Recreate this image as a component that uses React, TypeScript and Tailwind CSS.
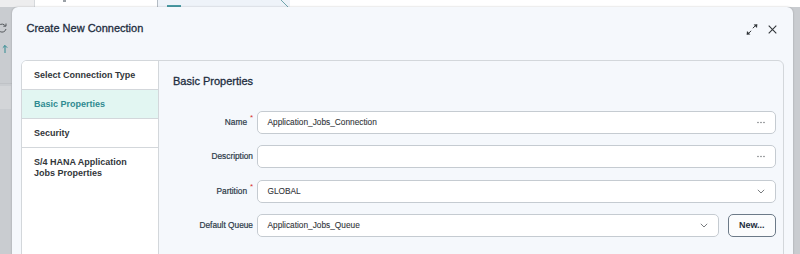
import React from "react";

function Dots() {
  return (
    <svg width="8" height="3" viewBox="0 0 8 3" className="shrink-0">
      <circle cx="1" cy="1.5" r="0.65" fill="#5b5f63" />
      <circle cx="4" cy="1.5" r="0.65" fill="#5b5f63" />
      <circle cx="7" cy="1.5" r="0.65" fill="#5b5f63" />
    </svg>
  );
}

function Chevron() {
  return (
    <svg width="8" height="5" viewBox="0 0 8 5" className="shrink-0">
      <path d="M0.8 0.8 L4 4 L7.2 0.8" fill="none" stroke="#6a6d70" strokeWidth="0.9" />
    </svg>
  );
}

function Row({ label, required, children }: { label: string; required?: boolean; children: React.ReactNode }) {
  return (
    <div className="flex items-center h-[23px]">
      <div className="w-[80px] shrink-0 flex justify-end items-center text-[8.3px] text-[#2c3a48] [-webkit-text-stroke:0.2px_#2c3a48]">
        <span>{label}</span>
        {required ? (
          <span className="ml-[3px] w-[3px] text-[8px] relative -top-[4px] text-[#d9322c] leading-none [-webkit-text-stroke:0px]">*</span>
        ) : null}
      </div>
      <div className="ml-[4px] flex-1 flex items-center h-full">{children}</div>
    </div>
  );
}

function Field({ value, right }: { value: string; right: React.ReactNode }) {
  return (
    <div className="flex-1 h-full flex items-center justify-between bg-white border border-[#c5cbd1] rounded-[5px] pl-[9.5px] pr-[10px]">
      <span className="text-[8.3px] text-[#32363a] [-webkit-text-stroke:0.1px_#32363a]">{value}</span>
      {right}
    </div>
  );
}

function NavItem({ children, active, last }: { children: React.ReactNode; active?: boolean; last?: boolean }) {
  return (
    <div
      className={
        "px-[12px] py-[8.5px] leading-[11px] text-[9px] font-bold " +
        (last ? "" : "border-b border-[#d3d7db] ") +
        (active ? "bg-[#e2f6f2] text-[#2f8a91]" : "bg-white text-[#32363a]")
      }
    >
      {children}
    </div>
  );
}

export default function App() {
  return (
    <div className="relative w-[800px] h-[254px] overflow-hidden bg-[#c9ccd0] font-['Liberation_Sans',Arial,sans-serif]">
      {/* page behind: top strip */}
      <div className="flex h-[7px] bg-white">
        <div className="w-[34px] bg-[#ededee]" />
        <div className="w-[123px] border-l border-[#d6d9dc] relative">
          <div className="absolute left-[28px] top-0 w-[3px] h-[2px] bg-[#9aa0a6]" />
        </div>
        <div className="w-[133px] bg-[#eef3f9] border-l border-[#b4bcc4] relative">
          <div className="absolute left-[9px] bottom-0 w-[14px] h-[2px] bg-[#4a9ba4]" />
          <svg width="10" height="7" className="absolute right-0 top-0">
            <path d="M1 0 L8 7" stroke="#6fa5ad" strokeWidth="1" />
          </svg>
        </div>
        <div className="flex-1" />
      </div>
      {/* page behind: left strip */}
      <div className="w-[12px] flex flex-col items-start">
        <svg width="12" height="12" viewBox="0 0 12 12" className="mt-[15px] -ml-[4px]">
          <path d="M9.5 4 A4 4 0 1 0 10 7" fill="none" stroke="#55595d" strokeWidth="1" />
          <path d="M10 1.5 L10 4.2 L7.3 4.2" fill="none" stroke="#55595d" strokeWidth="1" />
        </svg>
        <svg width="8" height="10" viewBox="0 0 8 10" className="mt-[10px] ml-[1px]">
          <path d="M4 9 L4 1.5 M1.8 3.7 L4 1.5 L6.2 3.7" fill="none" stroke="#2f8a91" strokeWidth="1" />
        </svg>
        <div className="mt-[29px] w-[12px] h-[1px] bg-[#bfc2c6]" />
        <div className="mt-[2px] w-[11px] h-[23px] bg-[#d3d5d8]" />
      </div>

      {/* dialog */}
      <div className="absolute left-[12px] top-[7px] w-[781px] h-[260px] bg-[#f5f8fc] rounded-t-[6px] shadow-[0_0_2px_rgba(0,0,0,0.25)] flex flex-col">
        <div className="h-[43px] flex items-center justify-between pl-[14.5px] pr-[16px]">
          <span className="text-[11px] text-[#1d2d3e] [-webkit-text-stroke:0.3px_#1d2d3e]">Create New Connection</span>
          <div className="flex items-center gap-[10px] mt-[1px]">
            <svg width="12" height="11" viewBox="0 0 12 11">
              <path d="M6.8 4.2 L10.2 1" stroke="#32363a" strokeWidth="1" />
              <path d="M7.6 0.6 L11.4 0.2 L11 4 Z" fill="#32363a" />
              <path d="M5.2 6.8 L1.8 10" stroke="#32363a" strokeWidth="1" />
              <path d="M4.4 10.4 L0.6 10.8 L1 7 Z" fill="#32363a" />
            </svg>
            <svg width="9" height="9" viewBox="0 0 9 9">
              <path d="M0.7 0.7 L8.3 8.3 M8.3 0.7 L0.7 8.3" stroke="#32363a" strokeWidth="1.1" />
            </svg>
          </div>
        </div>
        <div className="mt-[10px] mx-[9px] flex-1 flex border border-[#d3d7db] rounded-t-[6px] overflow-hidden">
          <div className="w-[137px] shrink-0 bg-white border-r border-[#d3d7db] flex flex-col">
            <NavItem>Select Connection Type</NavItem>
            <NavItem active>Basic Properties</NavItem>
            <NavItem>Security</NavItem>
            <NavItem last>
              S/4 HANA Application
              <br />
              Jobs Properties
            </NavItem>
          </div>
          <div className="flex-1 pl-[14px] pr-[7.5px] pt-[13.5px] flex flex-col">
            <div className="text-[11px] leading-[13px] text-[#1d2d3e] [-webkit-text-stroke:0.3px_#1d2d3e]">Basic Properties</div>
            <div className="mt-[23px] flex flex-col gap-[11.5px]">
              <Row label="Name" required>
                <Field value="Application_Jobs_Connection" right={<Dots />} />
              </Row>
              <Row label="Description">
                <Field value="" right={<Dots />} />
              </Row>
              <Row label="Partition" required>
                <Field value="GLOBAL" right={<Chevron />} />
              </Row>
              <Row label="Default Queue">
                <Field value="Application_Jobs_Queue" right={<Chevron />} />
                <button className="ml-[9px] w-[47.5px] h-full shrink-0 rounded-[5px] border border-[#6c7a88] bg-[#fbfcfd] text-[9px] font-bold text-[#1d2d3e]">
                  New...
                </button>
              </Row>
            </div>
          </div>
        </div>
      </div>
    </div>
  );
}
